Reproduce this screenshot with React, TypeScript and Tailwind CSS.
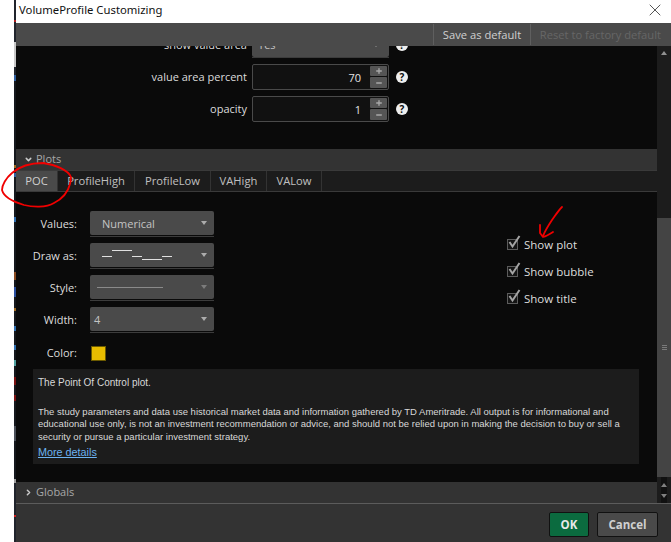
import { ChevronDown, ChevronRight, Minus, Plus, X } from "lucide-react";

const tabs = [
  { label: "POC", w: "w-[42px]", active: true },
  { label: "ProfileHigh", w: "w-[77px]" },
  { label: "ProfileLow", w: "w-[76px]" },
  { label: "VAHigh", w: "w-[56px]" },
  { label: "VALow", w: "w-[55px]" },
];

// sliver of the chart window behind the dialog
const strip: [number, string][] = [
  [20, "#20242c"], [2, "#b02020"], [20, "#20242c"], [25, "#c8c8c8"], [8, "#20242c"], [6, "#2f5f9f"],
  [84, "#15181d"], [3, "#a06a20"], [5, "#15181d"], [4, "#2f5f9f"], [40, "#15181d"], [5, "#2f6fb0"],
  [50, "#15181d"], [8, "#8a4a20"], [7, "#15181d"], [10, "#2a4fa0"], [11, "#15181d"], [3, "#a06a20"],
  [15, "#15181d"], [5, "#2f6fb0"], [14, "#15181d"], [5, "#2f6fb0"], [10, "#15181d"], [6, "#4fa0a0"],
  [11, "#15181d"], [8, "#7a1010"], [10, "#15181d"], [6, "#7a1010"], [25, "#15181d"], [15, "#4a4f58"],
  [38, "#15181d"], [4, "#a0a0a0"], [32, "#20242c"], [2, "#d02020"], [28, "#20242c"],
];

function Help() {
  return (
    <span className="flex h-[12px] w-[12px] items-center justify-center rounded-full bg-[#eeeeee] text-[10px] leading-none font-bold text-[#0a0a0a]">
      ?
    </span>
  );
}

function Spinner({ value }: { value: string }) {
  return (
    <div className="flex h-[26px] w-[137px] items-center justify-end rounded-[2px] border border-[#4a4a4a] bg-[#111111] pr-[1px]">
      <span className="mr-[9px] text-[#e4e4e4]">{value}</span>
      <div className="flex flex-col gap-px">
        <span className="flex h-[10px] w-[17px] items-center justify-center rounded-[1px] bg-[#555555] text-[#a8a8a8]">
          <Plus size={8} strokeWidth={4} />
        </span>
        <span className="flex h-[11px] w-[17px] items-center justify-center rounded-[1px] bg-[#555555] text-[#a8a8a8]">
          <Minus size={8} strokeWidth={4} />
        </span>
      </div>
    </div>
  );
}

function Select({ children, dim }: { children?: React.ReactNode; dim?: boolean }) {
  return (
    <div className="flex h-[26px] w-[124px] items-start border-b border-[#3c3c3c]">
      <div className="flex h-[24px] w-full items-center justify-between rounded-[2px] bg-[#4a4a4a] pr-[7px] text-[#c4c4c4]">
        <div className="min-w-0 flex-1">{children}</div>
        <span className={`h-0 w-0 border-x-[3.5px] border-t-[4px] border-x-transparent ${dim ? "border-t-[#7c7c7c]" : "border-t-[#acacac]"}`} />
      </div>
    </div>
  );
}

function FieldRow({ label, children }: { label: string; children: React.ReactNode }) {
  return (
    <div className="flex h-[32px] items-center">
      <span className="w-[61px] pb-[2px] text-right text-[#dcdcdc]">{label}</span>
      <div className="ml-[13px]">{children}</div>
    </div>
  );
}

function CheckRow({ label }: { label: string }) {
  return (
    <div className="relative flex h-[27px] items-center">
      <span className="h-[11px] w-[11px] border border-[#5c5c5c] bg-[#141414]" />
      <svg width="13" height="14" viewBox="0 0 13 14" fill="none" className="absolute top-[4px] left-[1px]">
        <path d="M1.5 7L4.5 11.5L11.5 1" stroke="#a4a4a4" strokeWidth="2" />
      </svg>
      <span className="ml-[6px] text-[11.5px] text-[#dedede]">{label}</span>
    </div>
  );
}

export default function App() {
  return (
    <div className="relative flex h-[542px] w-[671px] overflow-hidden bg-white font-['Open_Sans',sans-serif] text-[11px] leading-none">
      <div className="w-[14px] shrink-0 bg-white" />
      <div className="flex w-[2px] shrink-0 flex-col">
        {strip.map(([h, c], i) => (
          <div key={i} className="w-full shrink-0" style={{ height: h, backgroundColor: c }} />
        ))}
      </div>

      <div className="flex min-w-0 flex-1 flex-col">
        {/* title bar */}
        <div className="flex h-[23px] shrink-0 items-center justify-between bg-white pr-[6px] pb-[3px] pl-[3px]">
          <span className="font-['Noto_Sans',sans-serif] text-[11.3px] text-[#111111]">VolumeProfile Customizing</span>
          <X size={20} strokeWidth={0.8} className="text-black" />
        </div>

        {/* toolbar */}
        <div className="flex h-[23px] shrink-0 items-center justify-end bg-[#4a4a4a] pr-[10px] text-[11.2px]">
          <div className="flex h-[21px] w-[97px] items-center justify-center border-l border-[#5f5f5f] text-[#d0d0d0]">Save as default</div>
          <div className="flex h-[21px] w-[131px] items-center justify-end border-l border-[#5f5f5f] text-[#666666]">Reset to factory default</div>
        </div>

        <div className="flex min-h-0 flex-1">
          <div className="flex min-w-0 flex-1 flex-col">
            {/* scrolled study inputs */}
            <div className="h-[103px] shrink-0 overflow-hidden bg-[#0a0a0a]">
              <div className="mt-[-14px] flex flex-col gap-[6px]">
                <div className="flex h-[26px] items-center">
                  <span className="w-[231px] pb-[1px] text-right text-[#dcdcdc]">show value area</span>
                  <div className="ml-[5px] flex h-[26px] w-[137px] items-center justify-between border-b border-[#3c3c3c]">
                    <div className="flex h-[24px] w-full items-center justify-between rounded-[2px] bg-[#4a4a4a] px-[6px] text-[#c4c4c4]">
                      <span>Yes</span>
                      <span className="mr-[4px] h-0 w-0 border-x-[3.5px] border-t-[4px] border-x-transparent border-t-[#acacac]" />
                    </div>
                  </div>
                  <span className="ml-[7px]"><Help /></span>
                </div>
                {[{ l: "value area percent", v: "70" }, { l: "opacity", v: "1" }].map((r) => (
                  <div key={r.l} className="flex h-[26px] items-center">
                    <span className="w-[231px] pb-[1px] text-right text-[#dcdcdc]">{r.l}</span>
                    <div className="ml-[5px]"><Spinner value={r.v} /></div>
                    <span className="ml-[7px]"><Help /></span>
                  </div>
                ))}
              </div>
            </div>

            {/* Plots section */}
            <div className="flex h-[21px] shrink-0 items-center bg-[#333333] pl-[8px] text-[#a8a8a8]">
              <ChevronDown size={9} strokeWidth={4} className="text-[#c8c8c8]" />
              <span className="ml-[3px] pb-[2px]">Plots</span>
            </div>
            <div className="flex h-[22px] shrink-0 items-stretch border-y border-y-[#3a3a3a] bg-[#1c1c1c] text-[11.2px]">
              {tabs.map((t) => (
                <div
                  key={t.label}
                  className={`flex ${t.w} items-center justify-center border-r border-[#333333] ${t.active ? "bg-[#4a4a4a] text-[#cfcfcf]" : "text-[#c0c0c0]"}`}
                >
                  {t.label}
                </div>
              ))}
            </div>

            {/* plot settings */}
            <div className="flex min-h-0 flex-1 flex-col bg-[#0a0a0a]">
              <div className="flex h-[177px] shrink-0">
                <div className="flex w-[491px] flex-col pt-[16px]">
                  <FieldRow label="Values:">
                    <Select><span className="ml-[12px]">Numerical</span></Select>
                  </FieldRow>
                  <FieldRow label="Draw as:">
                    <Select>
                      <svg width="80" height="12" viewBox="0 0 80 12" className="ml-[12px]">
                        <path d="M0 7.5H10M10 1.5H30M30 7.5H40M40 10.5H60M60 7.5H70" stroke="#e0e0e0" strokeWidth="1" fill="none" />
                      </svg>
                    </Select>
                  </FieldRow>
                  <FieldRow label="Style:">
                    <Select dim><div className="ml-[7px] h-px w-[66px] bg-[#8a8a8a]" /></Select>
                  </FieldRow>
                  <FieldRow label="Width:">
                    <Select><span className="ml-[4px]">4</span></Select>
                  </FieldRow>
                  <div className="mt-[1px] flex h-[32px] items-center">
                    <span className="w-[61px] pb-[2px] text-right text-[#dcdcdc]">Color:</span>
                    <span className="ml-[14px] h-[15px] w-[15px] border border-[#6b5a00] bg-[#e8bc00]" />
                  </div>
                </div>
                <div className="flex flex-col pt-[39px]">
                  <CheckRow label="Show plot" />
                  <CheckRow label="Show bubble" />
                  <CheckRow label="Show title" />
                </div>
              </div>

              {/* description */}
              <div className="ml-[17px] h-[95px] w-[606px] shrink-0 bg-[#1c1c1c] pt-[8px] pl-[5px] font-['Liberation_Sans',sans-serif] text-[#d8d8d8]">
                <p className="text-[10px] leading-[12px]">The Point Of Control plot.</p>
                <p className="mt-[17px] whitespace-nowrap text-[9.5px] leading-[12.3px]">
                  The study parameters and data use historical market data and information gathered by TD Ameritrade. All output is for informational and
                  <br />
                  educational use only, is not an investment recommendation or advice, and should not be relied upon in making the decision to buy or sell a
                  <br />
                  security or pursue a particular investment strategy.
                </p>
                <p className="mt-[3px] text-[10.8px] leading-[13px] text-[#6db3f2] underline">More details</p>
              </div>
              <div className="h-[18px] shrink-0" />
            </div>

            {/* Globals */}
            <div className="flex h-[21px] shrink-0 items-center bg-[#333333] pl-[8px] text-[#a8a8a8]">
              <ChevronRight size={9} strokeWidth={4} className="text-[#c8c8c8]" />
              <span className="ml-[3px] pb-[2px]">Globals</span>
            </div>
          </div>

          {/* scrollbar */}
          <div className="flex w-[14px] shrink-0 flex-col items-center bg-[#1c1c1c]">
            <div className="flex h-[172px] w-full shrink-0 justify-center pt-[5px]">
              <span className="h-0 w-0 border-x-[3px] border-b-[4px] border-x-transparent border-b-[#909090]" />
            </div>
            <div className="flex h-[259px] w-full shrink-0 flex-col items-center justify-center gap-px bg-[#444444]">
              <span className="h-px w-[5px] bg-[#7a7a7a]" />
              <span className="h-px w-[5px] bg-[#7a7a7a]" />
              <span className="h-px w-[5px] bg-[#7a7a7a]" />
            </div>
            <div className="flex flex-1 flex-col items-center justify-center gap-[7px] bg-[#111111]">
              <span className="h-0 w-0 border-x-[3px] border-b-[4px] border-x-transparent border-b-[#808080]" />
              <span className="h-0 w-0 border-x-[3px] border-t-[4px] border-x-transparent border-t-[#808080]" />
            </div>
          </div>
        </div>

        {/* footer */}
        <div className="flex h-[39px] shrink-0 items-start justify-end gap-[8px] border-t border-[#5c5c5c] bg-[#333333] pt-[8px] pr-[13px] text-[11.5px] font-bold">
          <button className="flex h-[25px] w-[40px] items-center justify-center rounded-[2px] border border-[#111111] bg-[#0b6b3f] text-[#e8e8e8]">OK</button>
          <button className="flex h-[25px] w-[61px] items-center justify-center rounded-[2px] border border-[#111111] bg-[#4a4a4a] text-[#d0d0d0]">Cancel</button>
        </div>
      </div>

      {/* hand drawn marks on top of the screenshot */}
      <svg className="pointer-events-none absolute inset-0" width="671" height="542" viewBox="0 0 671 542" fill="none" stroke="#f00000" strokeWidth="1.8" strokeLinecap="round" strokeLinejoin="round">
        <path d="M71 177C68 170 56 165 43 163C32 163 20 166 12 173C6 178 2 185 2 190C4 198 14 202 24 205C32 207 46 208 54 203C62 199 68 192 70 184C71 181 71 179 71 177" />
        <path d="M562 207C558 211 555 216 552 220C548 226 545 231 543 236M540 225C540 229 540 232 540 233L543 237C547 236 550 234 553 232" />
      </svg>
    </div>
  );
}
